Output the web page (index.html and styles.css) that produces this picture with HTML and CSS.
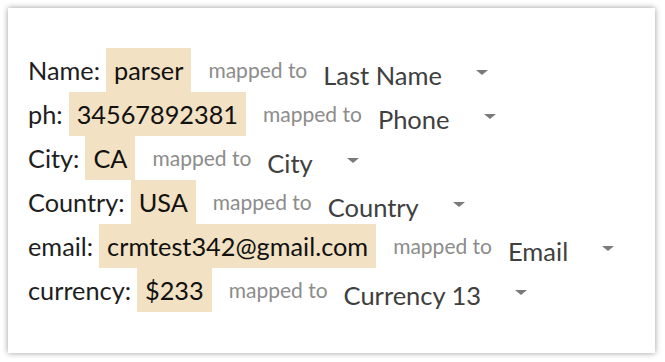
FILE: index.html
```html
<!DOCTYPE html>
<html>
<head>
<meta charset="utf-8">
<link rel="stylesheet" href="styles.css">
</head>
<body>
<div class="card">
  <div class="row">
    <span class="label">Name:</span><span class="value">parser</span>
    <span class="mapped">mapped to</span>
    <span class="select">Last Name</span><span class="caret"></span>
  </div>
  <div class="row">
    <span class="label">ph:</span><span class="value">34567892381</span>
    <span class="mapped">mapped to</span>
    <span class="select">Phone</span><span class="caret"></span>
  </div>
  <div class="row">
    <span class="label">City:</span><span class="value">CA</span>
    <span class="mapped">mapped to</span>
    <span class="select">City</span><span class="caret"></span>
  </div>
  <div class="row">
    <span class="label">Country:</span><span class="value">USA</span>
    <span class="mapped">mapped to</span>
    <span class="select">Country</span><span class="caret"></span>
  </div>
  <div class="row">
    <span class="label">email:</span><span class="value">crmtest342@gmail.com</span>
    <span class="mapped">mapped to</span>
    <span class="select">Email</span><span class="caret"></span>
  </div>
  <div class="row">
    <span class="label">currency:</span><span class="value">$233</span>
    <span class="mapped">mapped to</span>
    <span class="select">Currency 13</span><span class="caret"></span>
  </div>
</div>
</body>
</html>
```
FILE: styles.css
```css
html, body {
  margin: 0;
  padding: 0;
  background: #ffffff;
}
body {
  padding: 8px;
  font-family: Lato, "Liberation Sans", sans-serif;
}
.card {
  width: 647px;
  height: 345px;
  box-sizing: border-box;
  background: #fff;
  box-shadow: 0 0 6px rgba(0, 0, 0, 0.4);
  padding: 40px 0 0 20px;
}
.row {
  display: flex;
  align-items: center;
  height: 44px;
}
.label {
  font-size: 25.3px;
  color: #1e1e1e;
}
.value {
  align-self: stretch;
  display: flex;
  align-items: center;
  margin-left: 6px;
  padding: 0 8px;
  background: #f2e1c3;
  font-size: 25.3px;
  color: #111;
}
.mapped {
  margin-left: 17px;
  font-size: 21px;
  color: #8c8c8c;
  padding-bottom: 2px;
}
.select {
  margin-left: 16px;
  font-size: 25.5px;
  color: #404040;
  padding-top: 10px;
}
.caret {
  margin-left: 34px;
  width: 0;
  height: 0;
  border-left: 6px solid transparent;
  border-right: 6px solid transparent;
  border-top: 5px solid #7a7a7a;
  margin-top: 4px;
}
```
